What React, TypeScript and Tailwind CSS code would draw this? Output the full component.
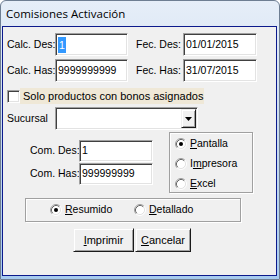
import React from 'react';

const sunken =
  'bg-white border border-t-[#a0a0a0] border-l-[#a0a0a0] border-r-white border-b-white shadow-[inset_1px_1px_0_#404040,inset_-1px_-1px_0_#e3e3e3]';
const raised =
  'bg-[#f0f0f0] border border-t-[#f0f0f0] border-l-[#f0f0f0] border-r-[#1a1a1a] border-b-[#1a1a1a] shadow-[inset_1px_1px_0_#fff,inset_-1px_-1px_0_#a0a0a0]';
const etched = 'border border-[#a0a0a0] shadow-[inset_1px_1px_0_#fff,1px_1px_0_#fff]';

const Radio = ({ checked }: { checked?: boolean }) => (
  <svg width="12" height="12" viewBox="0 0 12 12" className="shrink-0">
    <circle cx="6" cy="6" r="4.5" fill="#fff" />
    <path d="M2.11 9.89 A5.5 5.5 0 0 1 9.89 2.11" fill="none" stroke="#a0a0a0" />
    <path d="M9.89 2.11 A5.5 5.5 0 0 1 2.11 9.89" fill="none" stroke="#ffffff" />
    <path d="M2.82 9.18 A4.5 4.5 0 0 1 9.18 2.82" fill="none" stroke="#696969" />
    <path d="M9.18 2.82 A4.5 4.5 0 0 1 2.82 9.18" fill="none" stroke="#e3e3e3" />
    {checked && <circle cx="6" cy="6" r="2" fill="#000" />}
  </svg>
);

const Label = ({ w, children, className = '' }: { w: string; children: React.ReactNode; className?: string }) => (
  <span className={`${w} ${className} shrink-0 whitespace-nowrap`}>{children}</span>
);

const Field = ({ value, w, h = 'h-[23px]' }: { value: React.ReactNode; w: string; h?: string }) => (
  <div className={`${sunken} ${w} ${h} flex items-center pl-[2px] shrink-0 whitespace-nowrap`}>{value}</div>
);

const RadioItem = ({ label, u, checked }: { label: string; u: number; checked?: boolean }) => (
  <div className="flex items-center gap-[3px] h-[16px] whitespace-nowrap">
    <Radio checked={checked} />
    <span>
      {label.slice(0, u)}
      <span className="underline underline-offset-[1px]">{label[u]}</span>
      {label.slice(u + 1)}
    </span>
  </div>
);

export default function App() {
  return (
    <div className="w-[280px] h-[280px] rounded-t-[6px] border border-[#6e7e92] bg-gradient-to-b from-[#e6eef8] via-[#c8daef] to-[#a6cbef] flex flex-col overflow-hidden font-['Liberation_Sans',Arial,sans-serif] text-[10.5px] text-black">
      <div className="h-[25px] shrink-0 flex items-center pl-[5px] font-['Open_Sans',sans-serif] text-[11.5px] whitespace-nowrap">
        Comisiones Activación
      </div>
      <div className="flex-1 ml-[1px] mr-[2px] mb-[3px] border border-[#0c1a8c] bg-[#f0f0f0] flex flex-col">
        {/* fechas / calculos */}
        <div className="flex items-center pl-[4px] pt-[6px]">
          <Label w="w-[48px]">Calc. Des:</Label>
          <Field w="w-[73px]" value={<span className="bg-[#3399ff] text-white px-[1px] leading-[16px]">1</span>} />
          <Label w="w-[47px]" className="ml-[8px]">Fec. Des:</Label>
          <Field w="w-[74px]" value="01/01/2015" />
        </div>
        <div className="flex items-center pl-[4px] mt-[3px]">
          <Label w="w-[48px]">Calc. Has:</Label>
          <Field w="w-[73px]" value="9999999999" />
          <Label w="w-[47px]" className="ml-[8px]">Fec. Has:</Label>
          <Field w="w-[74px]" value="31/07/2015" />
        </div>

        {/* checkbox */}
        <div className="flex items-center pl-[4px] mt-[6px] h-[16px]">
          <div className={`${sunken} w-[13px] h-[13px] shrink-0`} />
          <span className="bg-[#efe8d7] w-[184px] h-[16px] flex items-center pl-[3px] whitespace-nowrap text-[11px]">
            Solo productos con bonos asignados
          </span>
        </div>

        {/* sucursal */}
        <div className="flex items-center pl-[4px] mt-[3px]">
          <Label w="w-[48px]">Sucursal</Label>
          <div className={`${sunken} w-[143px] h-[23px] flex justify-end items-center pr-[1px]`}>
            <div className={`${raised} w-[15px] h-[19px] flex items-center justify-center`}>
              <svg width="7" height="4" viewBox="0 0 7 4">
                <path d="M0 0h7L3.5 4z" fill="#000" />
              </svg>
            </div>
          </div>
        </div>

        {/* comisiones + salida */}
        <div className="flex mt-[2px]">
          <div className="w-[166px] pt-[8px] pl-[27px] flex flex-col gap-[1px]">
            <div className="flex items-center">
              <Label w="w-[49px]">Com. Des:</Label>
              <Field w="w-[74px]" h="h-[22px]" value="1" />
            </div>
            <div className="flex items-center">
              <Label w="w-[49px]">Com. Has:</Label>
              <Field w="w-[74px]" h="h-[22px]" value="999999999" />
            </div>
          </div>
          <div className={`${etched} w-[84px] h-[61px] flex flex-col gap-[4px] pt-[3px] pl-[5px]`}>
            <RadioItem label="Pantalla" u={0} checked />
            <RadioItem label="Impresora" u={1} />
            <RadioItem label="Excel" u={0} />
          </div>
        </div>

        {/* tipo de reporte */}
        <div className={`${etched} ml-[22px] mt-[5px] w-[216px] h-[24px] flex items-center`}>
          <div className="w-[108px] pl-[24px]">
            <RadioItem label="Resumido" u={0} checked />
          </div>
          <RadioItem label="Detallado" u={0} />
        </div>

        {/* botones */}
        <div className="flex ml-[70px] mt-[6px] gap-[1px]">
          <button className={`${raised} w-[61px] h-[24px] text-[11px]`}>
            <span className="underline underline-offset-[1px]">I</span>mprimir
          </button>
          <button className={`${raised} w-[56px] h-[24px] text-[11px]`}>
            <span className="underline underline-offset-[1px]">C</span>ancelar
          </button>
        </div>
      </div>
    </div>
  );
}
